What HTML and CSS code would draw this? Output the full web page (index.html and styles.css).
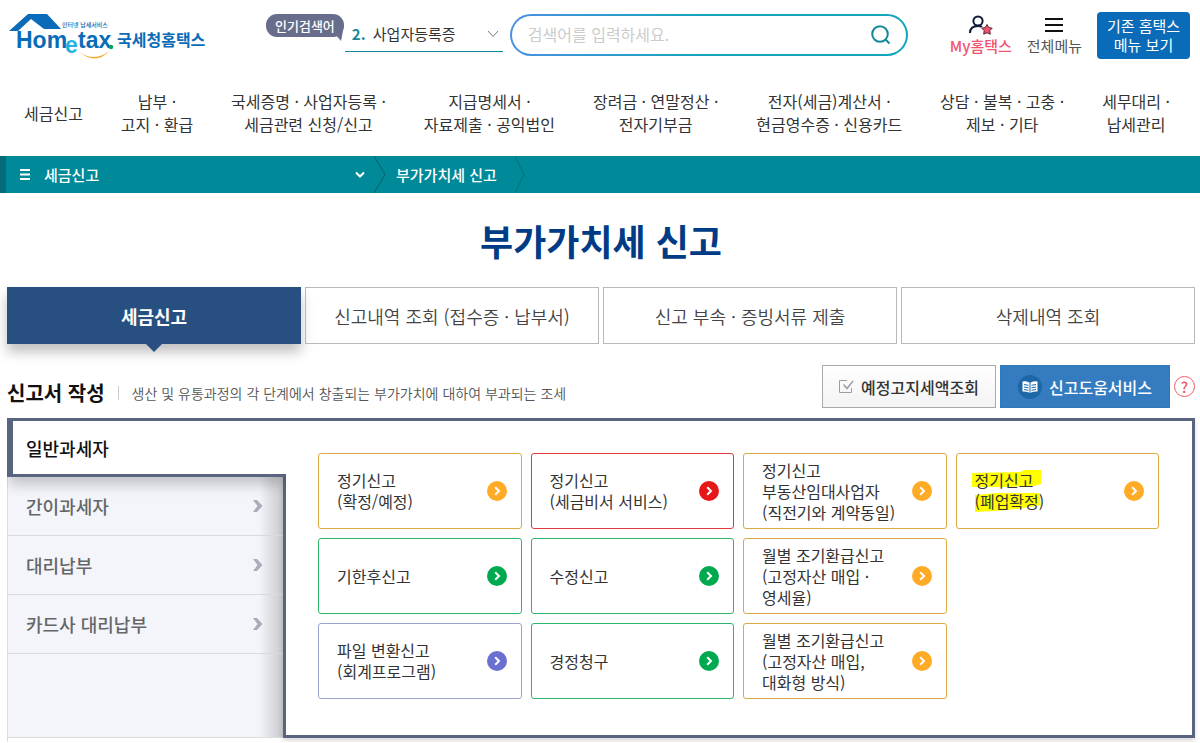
FILE: index.html
```html
<!DOCTYPE html>
<html lang="ko">
<head>
<meta charset="utf-8">
<meta name="viewport" content="width=device-width, initial-scale=1">
<title>부가가치세 신고 - 국세청 홈택스</title>
<link rel="stylesheet" href="styles.css">
</head>
<body>
<svg class="defs" aria-hidden="true">
  <symbol id="go" viewBox="0 0 20 20"><circle cx="10" cy="10" r="10" fill="currentColor"/><path d="M8.2 6.2 12 10l-3.800 3.800" fill="none" stroke="#fff" stroke-width="2"/></symbol>
  <symbol id="chev" viewBox="0 0 10 12"><path d="M0 0h4l5.500 6-5.500 6H0l4.500-6z" fill="#a9adb8"/></symbol>
</svg>
<header class="header">
  <a class="logo" href="#" aria-label="홈택스">
    <svg width="200" height="50" viewBox="0 0 200 50">
      <path d="M0 21 19 4h19l14 15H35L22 9 9 21z" fill="#0a6cb8"/>
      <text class="logo-tag" x="53" y="17">인터넷 납세서비스</text>
      <text class="logo-name" x="7" y="38">Hom</text>
      <text class="logo-name logo-e" x="56" y="43">e</text>
      <text class="logo-name" x="69" y="38">tax</text>
      <circle cx="102" cy="37" r="2.200" fill="#00a651"/>
      <path d="M69 41q16 12 31 0-13 15-31 0z" fill="#f9a825"/>
      <text class="logo-ko" x="108" y="36">국세청홈택스</text>
    </svg>
  </a>
  <span class="hot">인기검색어
    <svg class="hot-tail" width="9" height="10" viewBox="0 0 9 10"><path d="M0 3 8 0 6 10z" fill="#676d8a"/></svg>
  </span>
  <div class="keyword">
    <label for="keyword">2.</label>
    <select id="keyword"><option>사업자등록증</option></select>
    <svg width="12" height="8" viewBox="0 0 12 8"><path d="m1 1 5 5.500L11 1" fill="none" stroke="#777"/></svg>
  </div>
  <form class="search">
    <input type="text" aria-label="검색어" placeholder="검색어를 입력하세요.">
    <button type="button" aria-label="검색"><svg width="20" height="20" viewBox="0 0 20 20"><g fill="none" stroke="#12899a" stroke-width="2"><circle cx="9" cy="9" r="7.800"/><path d="m14 14 4.500 4.500"/></g></svg></button>
  </form>
  <div class="tools">
    <a class="tool my" href="#">
      <svg width="26" height="20" viewBox="0 0 26 20"><g fill="none" stroke="#111a3a" stroke-width="2"><circle cx="10" cy="6" r="4.600"/><path d="M2 18c0-5 3-7 8-7 2 0 3 .3 4 1"/></g><path d="m19 9.500 1.700 3 3.500.7-2.400 2.500.5 3.500-3.300-1.500-3.300 1.500.5-3.500-2.400-2.500 3.500-.7z" fill="#f2536f" stroke="#5a2a3a"/></svg>
      My홈택스
    </a>
    <a class="tool" href="#">
      <svg width="20" height="20" viewBox="0 0 20 20"><path d="M1 4h18M1 10h18M1 16h18" stroke="#111" stroke-width="2"/></svg>
      전체메뉴
    </a>
    <button class="old" type="button">기존 홈택스<br>메뉴 보기</button>
  </div>
</header>
<nav class="nav">
  <a href="#">세금신고</a>
  <a href="#">납부 ·<br>고지 · 환급</a>
  <a href="#">국세증명 · 사업자등록 ·<br>세금관련 신청/신고</a>
  <a href="#">지급명세서 ·<br>자료제출 · 공익법인</a>
  <a href="#">장려금 · 연말정산 ·<br>전자기부금</a>
  <a href="#">전자(세금)계산서 ·<br>현금영수증 · 신용카드</a>
  <a href="#">상담 · 불복 · 고충 ·<br>제보 · 기타</a>
  <a href="#">세무대리 ·<br>납세관리</a>
</nav>
<div class="crumbs">
  <button class="crumb-menu" type="button">
    <svg width="10" height="11" viewBox="0 0 10 11"><path d="M0 1h10M0 5.500h10M0 10h10" stroke="#fff" stroke-width="2"/></svg>
    <span>세금신고</span>
    <svg width="10" height="8" viewBox="0 0 10 8"><path d="m1 1.500 4 4 4-4" fill="none" stroke="#fff" stroke-width="2"/></svg>
  </button>
  <svg class="sep" width="12" height="37" viewBox="0 0 12 37"><path d="m0 0 11 18.500L0 37" fill="none" stroke="#025f6a"/></svg>
  <a href="#">부가가치세 신고</a>
  <svg class="sep" width="12" height="37" viewBox="0 0 12 37"><path d="m0 0 9 18.500L0 37" fill="none" stroke="#02707c"/></svg>
</div>
<main class="main">
  <h1>부가가치세 신고</h1>
  <div class="tabs">
    <button class="tab active" type="button">세금신고</button>
    <button class="tab" type="button">신고내역 조회 (접수증 · 납부서)</button>
    <button class="tab" type="button">신고 부속 · 증빙서류 제출</button>
    <button class="tab" type="button">삭제내역 조회</button>
  </div>
  <div class="section-head">
    <div class="section-title">
      <h2>신고서 작성</h2>
      <p>생산 및 유통과정의 각 단계에서 창출되는 부가가치에 대하여 부과되는 조세</p>
    </div>
    <button class="btn" type="button">
      <svg width="15" height="15" viewBox="0 0 15 15"><g fill="none" stroke="#9a9ea6"><path d="M8 1.500H.5v12h12V9"/><path d="m4.500 5.500 3.500 4L14 2" stroke-width="1.500"/></g></svg>
      예정고지세액조회
    </button>
    <button class="btn primary" type="button">
      <svg width="24" height="24" viewBox="0 0 24 24"><circle cx="12" cy="12" r="12" fill="#1d66a8"/><path d="M4.500 6.500Q9 5.500 12 8q3-2.500 7.500-1.500v10Q15 16 12 18q-3-2-7.500-1.500z" fill="#fff"/><path d="M12 8v10M6 9.500l4.500.8M6 12l4.500.8M6 14.500l4.500.8M18 9.500l-4.500.8M18 12l-4.500.8M18 14.500l-4.500.8" stroke="#1d66a8"/></svg>
      신고도움서비스
    </button>
    <button class="help" type="button" aria-label="도움말">?</button>
  </div>
  <div class="panel">
    <div class="side">
      <button class="side-item active" type="button">일반과세자</button>
      <button class="side-item" type="button">간이과세자<svg width="10" height="12"><use href="#chev"/></svg></button>
      <button class="side-item" type="button">대리납부<svg width="10" height="12"><use href="#chev"/></svg></button>
      <button class="side-item" type="button">카드사 대리납부<svg width="10" height="12"><use href="#chev"/></svg></button>
    </div>
    <div class="cards">
      <a class="card orange" href="#"><span>정기신고<br>(확정/예정)</span><svg width="20" height="20"><use href="#go"/></svg></a>
      <a class="card red" href="#"><span>정기신고<br>(세금비서 서비스)</span><svg width="20" height="20"><use href="#go"/></svg></a>
      <a class="card orange" href="#"><span>정기신고<br>부동산임대사업자<br>(직전기와 계약동일)</span><svg width="20" height="20"><use href="#go"/></svg></a>
      <a class="card orange" href="#"><mark><svg class="marker" width="72" height="44" viewBox="0 0 72 44"><path d="M0 3 48 2 53 0h16v14l-7 2-30 1H0zM3 25l22-2h42l2 12-18 3-16 2-12 1-20 1z" fill="#ff0"/></svg>정기신고<br>(폐업확정)</mark><svg width="20" height="20"><use href="#go"/></svg></a>
      <a class="card green" href="#"><span>기한후신고</span><svg width="20" height="20"><use href="#go"/></svg></a>
      <a class="card green" href="#"><span>수정신고</span><svg width="20" height="20"><use href="#go"/></svg></a>
      <a class="card orange" href="#"><span>월별 조기환급신고<br>(고정자산 매입 ·<br>영세율)</span><svg width="20" height="20"><use href="#go"/></svg></a>
      <a class="card violet first" href="#"><span>파일 변환신고<br>(회계프로그램)</span><svg width="20" height="20"><use href="#go"/></svg></a>
      <a class="card green" href="#"><span>경정청구</span><svg width="20" height="20"><use href="#go"/></svg></a>
      <a class="card orange" href="#"><span>월별 조기환급신고<br>(고정자산 매입,<br>대화형 방식)</span><svg width="20" height="20"><use href="#go"/></svg></a>
    </div>
  </div>
  <div class="below"></div>
</main>
</body>
</html>
```
FILE: styles.css
```css
* { box-sizing: border-box; }
body {
  margin: 0;
  font-family: "Noto Sans CJK KR", sans-serif;
  font-size: 16px;
  color: #333;
  background: #fff;
}
a { color: inherit; text-decoration: none; }
button, input, select { font: inherit; color: inherit; border: 0; background: none; padding: 0; margin: 0; }
svg { flex: none; display: block; }
h1, h2, p { margin: 0; }
.defs { position: absolute; width: 0; height: 0; }

.header { display: flex; align-items: flex-start; height: 80px; padding: 10px 10px 0 9px; }
.logo-tag { font-size: 6px; font-weight: 500; fill: #0a6cb8; }
.logo-name { font-family: "Liberation Sans", sans-serif; font-size: 23px; font-weight: 700; fill: #0a6cb8; }
.logo-e { fill: #1fb4e0; }
.logo-ko { font-size: 16px; font-weight: 700; fill: #0a6cb8; }
.hot {
  position: relative;
  margin: 4px 0 0 57px;
  padding: 0 9px;
  border-radius: 11px;
  background: #676d8a;
  color: #fff;
  font-size: 13px;
  font-weight: 500;
  line-height: 23px;
  white-space: nowrap;
}
.hot-tail { position: absolute; right: 0; bottom: -4px; }
.keyword {
  display: flex;
  align-items: center;
  width: 158px;
  height: 32px;
  margin: 10px 7px 0 1px;
  padding: 0 4px 4px 7px;
  border-bottom: 1px solid #12899a;
  font-size: 15px;
}
.keyword label { color: #12899a; font-weight: 700; width: 21px; }
.keyword select { appearance: none; flex: 1; min-width: 0; }
.search {
  display: flex;
  align-items: center;
  flex: 1;
  height: 42px;
  margin-top: 4px;
  padding: 0 15px 0 16px;
  border: 2px solid transparent;
  border-radius: 21px;
  background: linear-gradient(#fff, #fff) padding-box, linear-gradient(90deg, #4a90e2, #12a5bb 50%) border-box;
}
.search input { flex: 1; min-width: 0; padding-bottom: 2px; outline: 0; }
.search input::placeholder { color: #ccc; }
.tools { display: flex; margin-left: 42px; }
.tool { display: flex; flex-direction: column; align-items: center; padding-top: 5px; margin-right: 15px; font-size: 15px; line-height: 22px; color: #555; }
.my { color: #f2536f; font-weight: 500; }
.old { margin-top: 2px; width: 93px; height: 47px; padding-bottom: 2px; border-radius: 4px; background: #0a6cb8; color: #fff; font-size: 15px; line-height: 19px; }

.nav { display: flex; justify-content: space-between; align-items: center; height: 76px; padding: 0 30px 10px 24px; line-height: 23px; text-align: center; white-space: nowrap; }

.crumbs { display: flex; align-items: center; height: 37px; border-left: 6px solid #066b78; background: #008998; color: #fff; font-size: 15px; font-weight: 500; }
.crumb-menu { display: flex; align-items: center; width: 359px; padding-left: 14px; }
.crumb-menu span { flex: 1; padding-left: 14px; text-align: left; }
.sep { margin: 0 10px 0 9px; }
.sep:last-child { margin-left: 18px; }

.main { padding: 0 5px 0 7px; }
h1 { padding: 20px 0; font-size: 36px; font-weight: 700; line-height: 54px; text-align: center; color: #003b86; }
.tabs { display: grid; grid-template-columns: repeat(4, 1fr); gap: 4px; }
.tab { position: relative; height: 57px; border: 1px solid #b9b9b9; font-size: 18px; font-weight: 350; color: #444; }
.tab.active { border-color: #275081; background: #275081; color: #fff; font-weight: 700; box-shadow: 0 8px 12px rgba(0, 0, 0, .25); }
.tab.active::after { content: ""; position: absolute; left: calc(50% - 9px); top: 100%; border: 9px solid transparent; border-top-color: #275081; border-bottom: 0; }

.section-head { display: flex; align-items: flex-end; height: 74px; padding-bottom: 10px; }
.section-title { display: flex; align-items: center; flex: 1; }
h2 { font-size: 20px; font-weight: 700; color: #111; line-height: 30px; }
.section-title p { margin-left: 13px; padding-left: 13px; border-left: 1px solid #ccc; font-size: 14px; font-weight: 350; line-height: 14px; color: #555; }
.btn { display: flex; align-items: center; justify-content: center; gap: 7px; width: 174px; height: 43px; border: 1px solid #aaa; background: linear-gradient(#fff, #f3f3f3); font-weight: 500; margin-right: 4px; }
.btn.primary { width: 170px; border-color: #2f79bb; background: #347cbf; color: #fff; }
.help { align-self: flex-end; width: 21px; height: 21px; margin-bottom: 11px; border: 1px solid #ef5a62; border-radius: 50%; color: #ef5a62; font-size: 15px; font-weight: 500; line-height: 18px; }

.panel { display: grid; grid-template-columns: 276px 1fr; min-height: 320px; }
.side { background: linear-gradient(90deg, transparent 252px, #c8c9cb), #f3f5fb; border-bottom: 1px solid #ddd; box-shadow: inset 1px 0 #ddd; }
.side-item { display: flex; align-items: center; justify-content: space-between; width: 100%; height: 59px; padding: 0 20px 0 19px; border-bottom: 1px solid #d8dade; font-size: 18px; font-weight: 500; color: #666; }
.side-item.active { position: relative; width: calc(100% + 3px); padding-left: 13px; border: 3px solid #596580; border-left-width: 6px; border-right: 0; background: #fff; color: #111; box-shadow: 0 10px 12px -2px rgba(0, 0, 0, .2); clip-path: inset(0 0 -24px 0); }
.cards { display: grid; grid-template-columns: repeat(4, 1fr); grid-auto-rows: 76px; gap: 9px; padding: 32px 33px 35px 32px; border: 3px solid #596580; box-shadow: 0 3px 5px rgba(0, 0, 0, .15); }
.card { display: flex; align-items: center; justify-content: space-between; padding: 0 14px 0 18px; border: 1px solid; border-radius: 3px; line-height: 21px; white-space: nowrap; }
.card span { color: #333; }
.first { grid-column: 1; }
.orange { color: #ffab26; border-color: #dcaa42; }
.red { color: #e61717; border-color: #e0393e; }
.green { color: #00a94f; border-color: #2db56c; }
.violet { color: #6a70d0; border-color: #9aa5cf; }
mark { position: relative; z-index: 0; background: none; color: #333; }
.marker { position: absolute; left: -3px; top: 0; z-index: -1; }
.below { height: 4px; border-left: 1px solid #ddd; }
```
